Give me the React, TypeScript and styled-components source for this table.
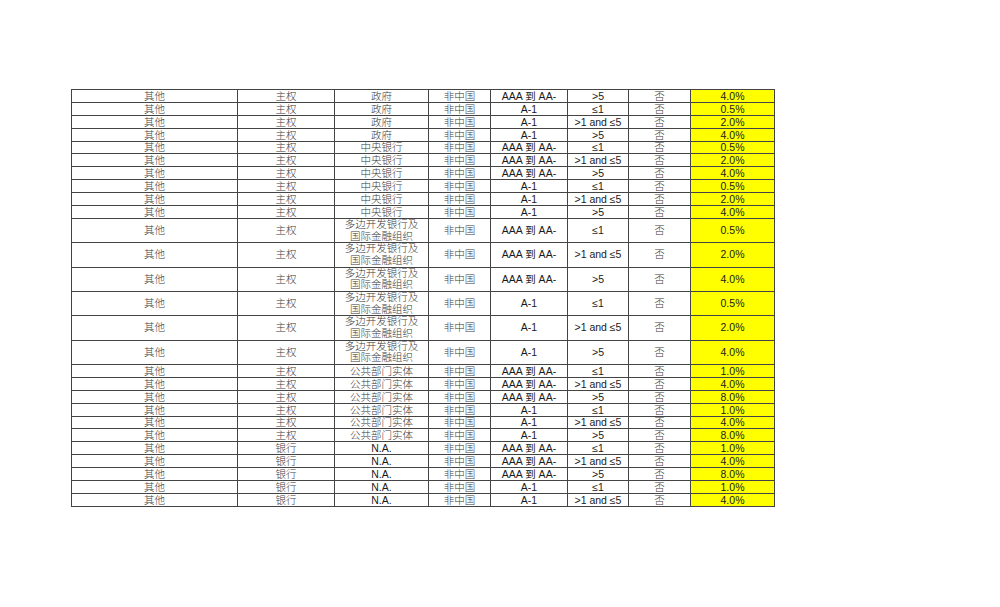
import styled, { createGlobalStyle } from "styled-components";

type Row = {
  kind: string;
  sub: string;
  rating: string;
  term: string;
  weight: string;
};

const MDB = "多边开发银行及\n国际金融组织";

const rows: Array<Row> = [
  { kind: "主权", sub: "政府", rating: "AAA 到 AA-", term: ">5", weight: "4.0%" },
  { kind: "主权", sub: "政府", rating: "A-1", term: "≤1", weight: "0.5%" },
  { kind: "主权", sub: "政府", rating: "A-1", term: ">1 and ≤5", weight: "2.0%" },
  { kind: "主权", sub: "政府", rating: "A-1", term: ">5", weight: "4.0%" },
  { kind: "主权", sub: "中央银行", rating: "AAA 到 AA-", term: "≤1", weight: "0.5%" },
  { kind: "主权", sub: "中央银行", rating: "AAA 到 AA-", term: ">1 and ≤5", weight: "2.0%" },
  { kind: "主权", sub: "中央银行", rating: "AAA 到 AA-", term: ">5", weight: "4.0%" },
  { kind: "主权", sub: "中央银行", rating: "A-1", term: "≤1", weight: "0.5%" },
  { kind: "主权", sub: "中央银行", rating: "A-1", term: ">1 and ≤5", weight: "2.0%" },
  { kind: "主权", sub: "中央银行", rating: "A-1", term: ">5", weight: "4.0%" },
  { kind: "主权", sub: MDB, rating: "AAA 到 AA-", term: "≤1", weight: "0.5%" },
  { kind: "主权", sub: MDB, rating: "AAA 到 AA-", term: ">1 and ≤5", weight: "2.0%" },
  { kind: "主权", sub: MDB, rating: "AAA 到 AA-", term: ">5", weight: "4.0%" },
  { kind: "主权", sub: MDB, rating: "A-1", term: "≤1", weight: "0.5%" },
  { kind: "主权", sub: MDB, rating: "A-1", term: ">1 and ≤5", weight: "2.0%" },
  { kind: "主权", sub: MDB, rating: "A-1", term: ">5", weight: "4.0%" },
  { kind: "主权", sub: "公共部门实体", rating: "AAA 到 AA-", term: "≤1", weight: "1.0%" },
  { kind: "主权", sub: "公共部门实体", rating: "AAA 到 AA-", term: ">1 and ≤5", weight: "4.0%" },
  { kind: "主权", sub: "公共部门实体", rating: "AAA 到 AA-", term: ">5", weight: "8.0%" },
  { kind: "主权", sub: "公共部门实体", rating: "A-1", term: "≤1", weight: "1.0%" },
  { kind: "主权", sub: "公共部门实体", rating: "A-1", term: ">1 and ≤5", weight: "4.0%" },
  { kind: "主权", sub: "公共部门实体", rating: "A-1", term: ">5", weight: "8.0%" },
  { kind: "银行", sub: "N.A.", rating: "AAA 到 AA-", term: "≤1", weight: "1.0%" },
  { kind: "银行", sub: "N.A.", rating: "AAA 到 AA-", term: ">1 and ≤5", weight: "4.0%" },
  { kind: "银行", sub: "N.A.", rating: "AAA 到 AA-", term: ">5", weight: "8.0%" },
  { kind: "银行", sub: "N.A.", rating: "A-1", term: "≤1", weight: "1.0%" },
  { kind: "银行", sub: "N.A.", rating: "A-1", term: ">1 and ≤5", weight: "4.0%" },
];

const widths = [166, 97, 94, 62, 77, 61, 62, 84];

export default function App(): JSX.Element {
  return (
    <>
      <GlobalStyle />
      <Page>
        <Sheet>
          <colgroup>
            {widths.map((w, i) => (
              <col key={i} style={{ width: w }} />
            ))}
          </colgroup>
          <tbody>
            {rows.map((row, i) => {
              const tall = row.sub === MDB;
              const subIsLatin = row.sub === "N.A.";
              return (
                <SheetRow key={i} $tall={tall}>
                  <Cell $font="cjk">其他</Cell>
                  <Cell $font="cjk">{row.kind}</Cell>
                  <Cell $font={subIsLatin ? "latin" : "cjk"} $wrap={tall}>
                    {row.sub}
                  </Cell>
                  <Cell $font="cjk">非中国</Cell>
                  <Cell $font="latin">{row.rating}</Cell>
                  <Cell $font="latin">{row.term}</Cell>
                  <Cell $font="cjk">否</Cell>
                  <Cell $font="latin" $highlight>
                    {row.weight}
                  </Cell>
                </SheetRow>
              );
            })}
          </tbody>
        </Sheet>
      </Page>
    </>
  );
}

const GlobalStyle = createGlobalStyle`
  html, body {
    margin: 0;
    padding: 0;
    background: #fff;
  }
`;

const Page = styled.div`
  width: 1000px;
  height: 607px;
  padding: 89px 0 0 71px;
  box-sizing: border-box;
  overflow: hidden;
`;

const Sheet = styled.table`
  border-collapse: collapse;
  table-layout: fixed;
  width: 704px;
`;

const SheetRow = styled.tr<{ $tall?: boolean }>`
  height: ${(p) => (p.$tall ? "24.35px" : "12.9px")};
  & > td {
    vertical-align: ${(p) => (p.$tall ? "middle" : "bottom")};
  }
`;

const Cell = styled.td<{ $font: "cjk" | "latin"; $highlight?: boolean; $wrap?: boolean }>`
  border: 1px solid #444;
  padding: 0;
  text-align: center;
  white-space: ${(p) => (p.$wrap ? "pre-line" : "nowrap")};
  overflow: hidden;
  font-size: 10.5px;
  line-height: ${(p) => (p.$wrap ? "11.6px" : "11px")};
  font-family: ${(p) =>
    p.$font === "cjk"
      ? '"Liberation Serif", "Noto Sans CJK SC", serif'
      : '"Liberation Sans", "Noto Sans CJK SC", sans-serif'};
  color: ${(p) => (p.$font === "cjk" ? "#3a3a3a" : "#1a1a1a")};
  font-weight: ${(p) => (p.$font === "cjk" ? 300 : 400)};
  background: ${(p) => (p.$highlight ? "#ffff00" : "transparent")};
`;
